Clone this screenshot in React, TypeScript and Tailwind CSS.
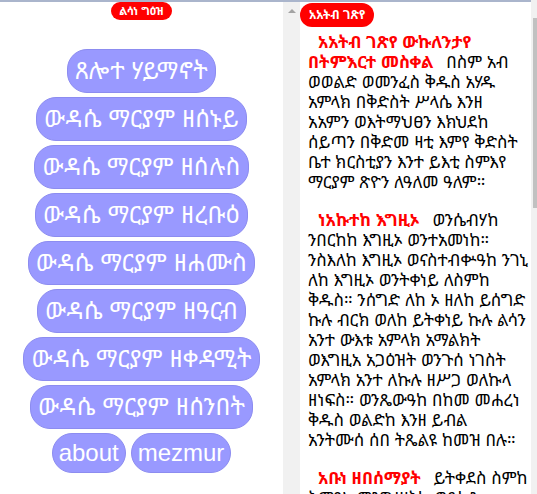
const days = [
  "ጸሎተ ሃይማኖት",
  "ውዳሴ ማርያም ዘሰኑይ",
  "ውዳሴ ማርያም ዘሰሉስ",
  "ውዳሴ ማርያም ዘረቡዕ",
  "ውዳሴ ማርያም ዘሐሙስ",
  "ውዳሴ ማርያም ዘዓርብ",
  "ውዳሴ ማርያም ዘቀዳሚት",
  "ውዳሴ ማርያም ዘሰንበት",
];

const prayers = [
  {
    title: "አአትብ ገጽየ ውኩለንታየ በትምእርተ መስቀል",
    body: "በስም አብ ወወልድ ወመንፈስ ቅዱስ አሃዱ አምላክ በቅድስት ሥላሴ እንዘ አአምን ወእትማህፀን እክህደከ ሰይጣን በቅድመ ዛቲ እምየ ቅድስት ቤተ ክርስቲያን እንተ ይእቲ ስምእየ ማርያም ጽዮን ለዓለመ ዓለም።",
  },
  {
    title: "ነአኩተከ እግዚኦ",
    body: "ወንሴብሃከ ንበርከከ እግዚኦ ወንተአመነከ። ንስእለከ እግዚኦ ወናስተብቍዓከ ንገኒ ለከ እግዚኦ ወንትቀነይ ለስምከ ቅዱስ። ንሰግድ ለከ ኦ ዘለከ ይሰግድ ኩሉ ብርክ ወለከ ይትቀነይ ኩሉ ልሳን አንተ ውእቱ አምላክ አማልክት ወእግዚአ አጋዕዝት ወንጉሰ ነገስት አምላክ አንተ ለኩሉ ዘሥጋ ወለኩላ ዘነፍስ። ወንጼውዓከ በከመ መሐረነ ቅዱስ ወልድከ እንዘ ይብል አንትሙሰ ሰበ ትጼልዩ ከመዝ በሉ።",
  },
  {
    title: "አቡነ ዘበሰማያት",
    body: "ይትቀደስ ስምከ ትምጻእ መንግሥትከ ወይኩን ፈቃድከ በከመ በሰማይ ከማሁ በምድርኒ ሲሳየነ ዘለለ ዕለትነ ሀበነ ዮም።",
  },
];

const btn =
  "rounded-[20px] border border-[#8c8cf0] bg-[#9999ff] text-[24px] text-white";

export default function App() {
  return (
    <div className="flex w-[537px] h-[494px] overflow-hidden bg-white font-['Liberation_Sans','Noto_Sans_Ethiopic',sans-serif]">
      <div className="flex w-[531px] shrink-0 flex-col">
        <div className="h-[2px] bg-[#aab5cc]" />
        <div className="flex min-h-0 flex-1">
          {/* menu */}
          <div className="w-[283px] shrink-0 overflow-hidden">
            <div className="flex justify-center">
              <span className="rounded-full bg-[#ff0000] px-[8px] py-[2px] text-[11px] font-bold leading-[14px] text-white">
                ልሳነ ግዕዝ
              </span>
            </div>
            <div className="mt-[29px] flex flex-col items-center gap-[4px]">
              {days.map((d) => (
                <button key={d} className={`${btn} px-[7px] py-[4px] leading-[34px] tracking-[0.2px]`}>
                  {d}
                </button>
              ))}
              <div className="flex gap-[5px]">
                <button className={`${btn} px-[6px] py-[5px] leading-[28px]`}>about</button>
                <button className={`${btn} px-[6px] py-[5px] leading-[28px]`}>mezmur</button>
              </div>
            </div>
          </div>

          {/* scrollbar of the menu */}
          <div className="flex w-[17px] shrink-0 justify-center bg-[#f1f1f1] pt-[7px]">
            <div className="h-0 w-0 border-x-[4px] border-b-[4px] border-x-transparent border-b-[#a3a3a3]" />
          </div>

          {/* reading */}
          <div className="flex-1 overflow-hidden">
            <div className="flex">
              <span className="mt-px rounded-full bg-[#ff0000] px-[9px] py-[3px] text-[12px] font-bold leading-[18px] text-white">
                አአትብ ገጽየ
              </span>
            </div>
            <div className="mt-[6px] pl-2 pr-[3px] text-[17px] leading-[20px] text-black">
              {prayers.map((p) => (
                <p key={p.title} className="mb-[18px]">
                  <span className="pl-[10px] pr-[8px] font-bold text-[#ff0000]">{p.title}</span>{" "}
                  {p.body}
                </p>
              ))}
            </div>
          </div>
        </div>
      </div>

      {/* scrollbar of the reading pane, cut by the window */}
      <div className="flex w-[6px] shrink-0 bg-[#f1f1f1] pl-[2px] pt-[18px]">
        <div className="h-[190px] w-full bg-[#c1c1c1]" />
      </div>
    </div>
  );
}
